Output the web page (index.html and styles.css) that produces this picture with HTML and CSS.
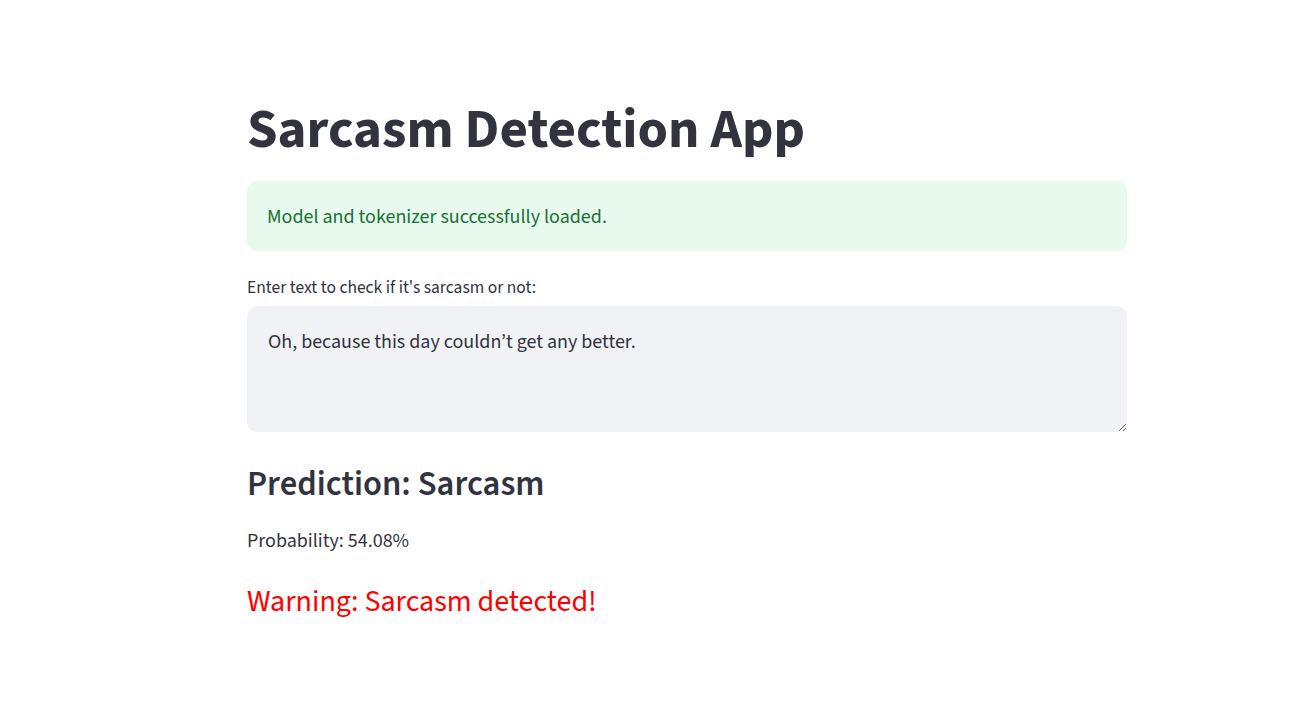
FILE: index.html
```html
<!DOCTYPE html>
<html lang="en">
<head>
<meta charset="utf-8">
<title>Sarcasm Detection App</title>
<link rel="stylesheet" href="styles.css">
</head>
<body>
<main class="main">
  <h1 class="title">Sarcasm Detection App</h1>
  <div class="alert">Model and tokenizer successfully loaded.</div>
  <label class="label" for="txt">Enter text to check if it's sarcasm or not:</label>
  <textarea class="input" id="txt">Oh, because this day couldn’t get any better.</textarea>
  <h3 class="prediction">Prediction: Sarcasm</h3>
  <p class="prob">Probability: 54.08%</p>
  <p class="warning">Warning: Sarcasm detected!</p>
</main>
</body>
</html>
```

FILE: styles.css
```css
html, body {
  margin: 0;
  padding: 0;
  background: #ffffff;
}
body {
  font-family: "Source Sans Pro", "Source Sans 3", Lato, "Noto Sans", sans-serif;
  color: #31333f;
}
.main {
  width: 880px;
  margin-left: 247px;
  padding-top: 97px;
  display: flex;
  flex-direction: column;
}
.title {
  margin: 0;
  font-size: 55px;
  line-height: 66px;
  font-weight: 700;
  color: #31333f;
}
.alert {
  margin-top: 18px;
  height: 70px;
  box-sizing: border-box;
  padding: 2px 20px 0;
  display: flex;
  align-items: center;
  background: #e8f9ee;
  border-radius: 10px;
  color: #177233;
  font-size: 20px;
}
.label {
  margin-top: 26px;
  font-size: 17.5px;
  line-height: 22px;
}
.input {
  margin-top: 7px;
  height: 126px;
  box-sizing: border-box;
  width: 100%;
  padding: 21px 21px 19px;
  border: none;
  outline: none;
  border-radius: 10px;
  background: #f0f2f6;
  color: #31333f;
  font-family: inherit;
  font-size: 20px;
  line-height: 30px;
  resize: vertical;
}
.prediction {
  margin: 32px 0 0;
  font-size: 34.6px;
  line-height: 42px;
  font-weight: 600;
}
.prob {
  margin: 20px 0 0;
  font-size: 20px;
  line-height: 30px;
}
.warning {
  margin: 28px 0 0;
  font-size: 30px;
  line-height: 36px;
  color: #ff0000;
}
```
